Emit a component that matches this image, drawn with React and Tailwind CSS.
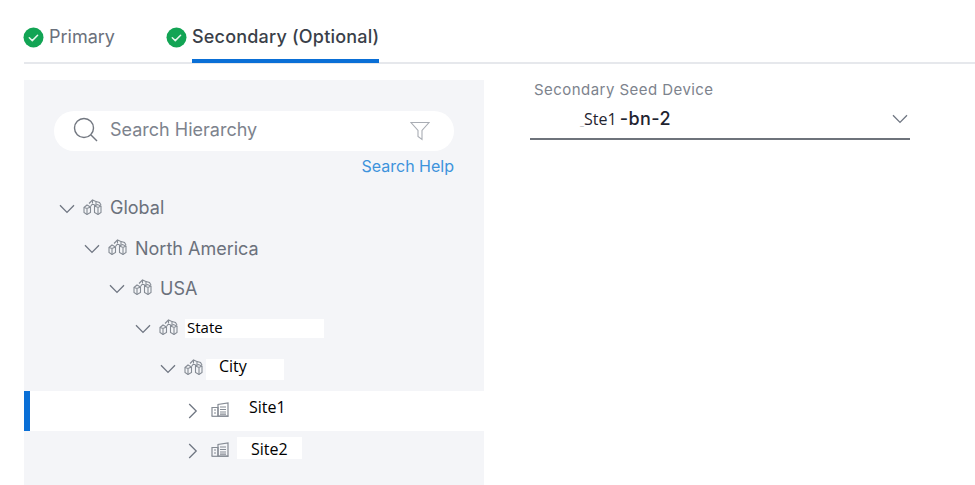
import React from "react";

const Check = () => (
  <svg width="21" height="21" viewBox="0 0 21 21" className="shrink-0">
    <circle cx="10.5" cy="10.5" r="10" fill="#12a454" />
    <path d="M6.3 10.8l3 2.800 5.300-5.400" fill="none" stroke="#e8f7ee" strokeWidth="1.5" strokeLinecap="round" strokeLinejoin="round" />
  </svg>
);

const Down = () => (
  <svg width="16" height="10" viewBox="0 0 16 10" className="shrink-0">
    <path d="M1 1.200l7 7.200 7-7.200" fill="none" stroke="#6f7682" strokeWidth="1.3" />
  </svg>
);

const Right = () => (
  <svg width="10" height="16" viewBox="0 0 10 16" className="shrink-0">
    <path d="M1.200 1l7 7-7 7" fill="none" stroke="#6f7682" strokeWidth="1.3" />
  </svg>
);

const Cluster = () => (
  <svg width="19" height="16" viewBox="0 0 19 16" className="shrink-0 mb-[4px]" fill="none" stroke="#858b94" strokeWidth="1.1">
    <path d="M6 4.500L9.500 1 13 2.500V6" />
    <path d="M9.500 1v3.500M13 2.500l3.500 1L18 6" />
    <path d="M1 8.500L4 6l3.500 2v5.500L4 15.500 1 13.500z" />
    <path d="M4 9.500v6M1 8.500l3 1 3.500-1.500" />
    <path d="M7.500 7.500L9 5.500h2l1 1.500" />
    <path d="M11.500 7L14.500 5.500 18 7v6.500L15 15.500l-3.500-2z" />
    <path d="M15 8.500v7M11.500 7l3.500 1.500L18 7" />
  </svg>
);

const SiteIcon = () => (
  <svg width="18" height="15" viewBox="0 0 18 15" className="shrink-0 mb-[3px]" fill="none" stroke="#858b94" strokeWidth="1.2">
    <path d="M1 14V5.500h6V14" />
    <path d="M7 14V2.500L17 1v13z" />
    <path d="M0.500 14.300h17" />
    <path d="M9 5h6M9 7.500h6M9 10h6M9 12.200h6M3 8h2M3 11h2" />
  </svg>
);

const Row = ({ pad, children }) => (
  <div className={`flex items-center h-10 gap-2 ${pad}`}>
    <Down />
    <Cluster />
    {children}
  </div>
);

export default function App() {
  return (
    <div className="w-[975px] h-[485px] overflow-hidden bg-white pl-6 font-['Inter','Liberation_Sans',sans-serif] text-[#6b717c]">
      <div className="h-[64px] border-b-2 border-[#e6e8ec] flex items-start pt-[25px] text-[18px] leading-[24px]">
        <div className="flex items-center gap-[5px] w-[143px] -ml-[1px]">
          <Check />
          <span>Primary</span>
        </div>
        <div className="flex items-center gap-[5px]">
          <Check />
          <div className="relative">
            <span className="text-[#3a3f49] font-medium tracking-[0.2px]">Secondary (Optional)</span>
            <div className="absolute left-0 right-0 top-[34px] h-[4px] bg-[#0a6fd6]" />
          </div>
        </div>
      </div>

      <div className="flex mt-[16px]">
        <div className="w-[460px] h-[405px] bg-[#f4f5f8] pt-[31px]">
          <div className="ml-[30px] w-[400px] h-[40px] rounded-full bg-white flex items-center pl-[19px] pr-[24px] pb-[3px]">
            <svg width="25" height="25" viewBox="0 0 25 25" className="shrink-0" fill="none" stroke="#727780" strokeWidth="1.4">
              <circle cx="11" cy="11" r="9.500" />
              <path d="M18 18l6 6" />
            </svg>
            <span className="ml-[12px] text-[18px] leading-[24px] text-[#7d838d] flex-1">Search Hierarchy</span>
            <svg width="20" height="20" viewBox="0 0 20 20" className="shrink-0 mt-[3px]" fill="none" stroke="#a9adb4" strokeWidth="1.100">
              <path d="M1 1.500h18l-7 8v9l-4-3v-6z" />
            </svg>
          </div>
          <div className="ml-[30px] w-[400px] text-right text-[16px] leading-[20px] text-[#3d93dc] mt-[5px]">Search Help</div>

          <div className="mt-[13px] text-[18px] leading-[24px]">
            <Row pad="pl-[35px]">
              <span className="mb-[2px]">Global</span>
            </Row>
            <Row pad="pl-[60px]">
              <span>North America</span>
            </Row>
            <Row pad="pl-[85px]">
              <span>USA</span>
            </Row>
            <Row pad="pl-[111px]">
              <span className="-ml-[1px] mb-[2px] w-[139px] h-[19px] bg-white text-black text-[15px] leading-[16px] pl-[2px] font-['Open_Sans',sans-serif]">State</span>
            </Row>
            <Row pad="pl-[136px]">
              <span className="-ml-[5px] w-[78px] h-[21px] bg-white text-black text-[16px] leading-[14px] pl-[13px] font-['Open_Sans',sans-serif]">City</span>
            </Row>
            <div className="relative h-10 mt-[2px] bg-white flex items-center pl-[164px] gap-[13px]">
              <div className="absolute left-0 top-0 bottom-0 w-[6px] bg-[#0a6fd6]" />
              <Right />
              <SiteIcon />
              <span className="ml-[7px] mb-[9px] text-black text-[16px] leading-[18px] font-['Open_Sans',sans-serif]">Site1</span>
            </div>
            <div className="h-10 flex items-center pl-[164px] gap-[13px]">
              <Right />
              <SiteIcon />
              <span className="-ml-[5px] mb-[6px] w-[65px] h-[22px] bg-white text-black text-[16px] leading-[24px] pl-[14px] font-['Open_Sans',sans-serif]">Site2</span>
            </div>
          </div>
        </div>

        <div className="ml-[46px] w-[380px] pt-[1px]">
          <div className="pl-[4px] text-[15px] leading-[18px] text-[#7d838d] tracking-[0.45px]">Secondary Seed Device</div>
          <div className="h-[41px] border-b-2 border-[#6e737b] flex items-center justify-between pr-[2px]">
            <span className="pl-[50px] text-[16px] text-[#1f2430] font-['Open_Sans',sans-serif]">
              <span className="text-[#a0a4ab] text-[9px]">_</span>Ste1<span className="-ml-[2px] text-[18px] font-medium tracking-[0.4px] font-['Inter',sans-serif]"> -bn-2</span>
            </span>
            <Down />
          </div>
        </div>
      </div>
    </div>
  );
}
